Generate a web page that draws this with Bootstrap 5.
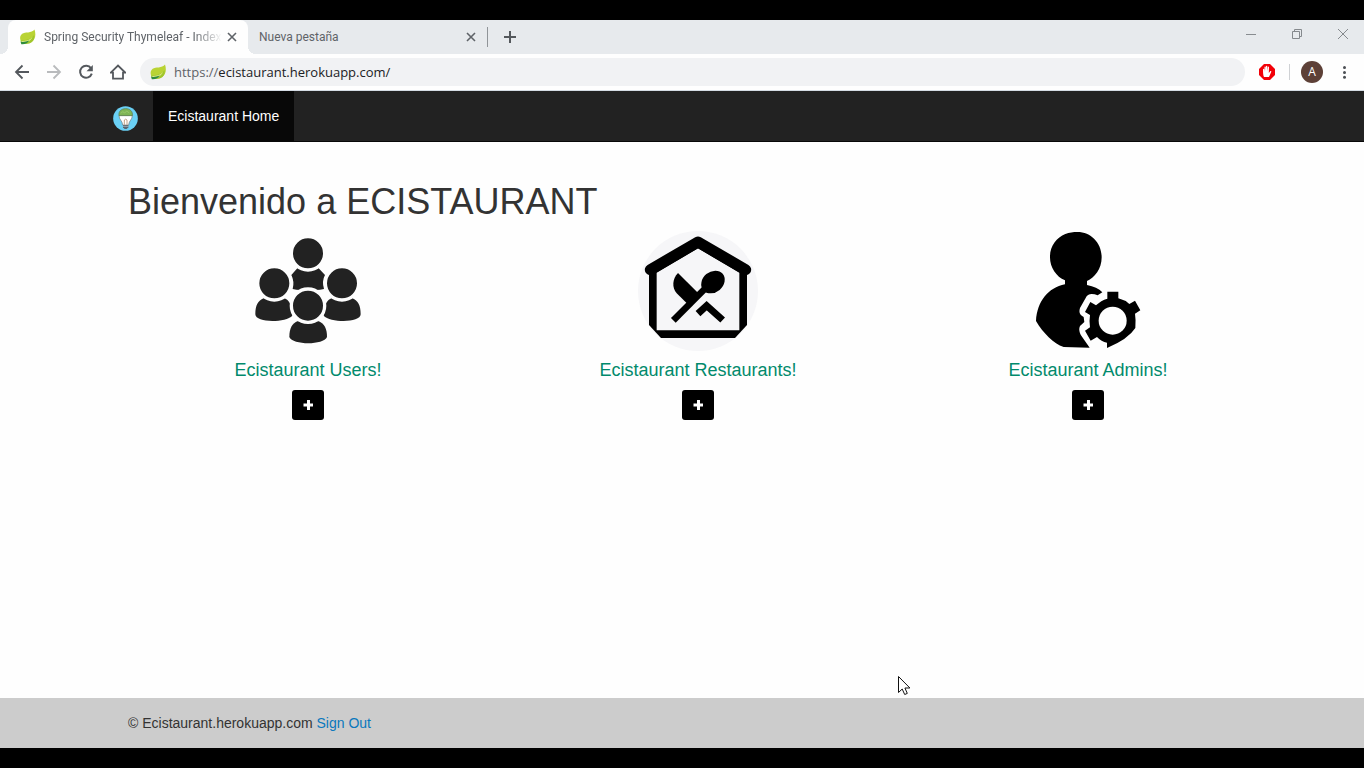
<!DOCTYPE html>
<html lang="es">
<head>
<meta charset="utf-8">
<meta name="viewport" content="width=device-width, initial-scale=1">
<title>Spring Security Thymeleaf - Index</title>
<link href="https://cdn.jsdelivr.net/npm/bootstrap@5.3.0/dist/css/bootstrap.min.css" rel="stylesheet">
<style>
  body { font-family: "Liberation Sans", Arial, sans-serif; font-size: 14px; line-height: 20px; color: #333; background: #000; }
  svg { display: block; flex: none; }
  button { font: inherit; }
  .plain-btn { border: 0; background: none; padding: 0; color: #5f6368; }
  .edge-bar { height: 20px; }
  .chrome-ui { font-family: "Open Sans", "Noto Sans", sans-serif; color: #5f6368; }
  .tab-strip { height: 34px; background: #e7eaed; font-family: Roboto, "Open Sans", sans-serif; font-size: 12px; padding: 0 16px 0 8px; }
  .tab-item { width: 239px; height: 34px; padding: 0 11px; }
  .tab-current { width: 240px; background: #fefefe; border-radius: 8px 8px 0 0; position: relative; }
  .tab-current::before, .tab-current::after { content: ""; position: absolute; bottom: 0; width: 8px; height: 8px; }
  .tab-current::before { left: -8px; background: radial-gradient(circle at 0 0, #e7eaed 8px, #fefefe 8px); }
  .tab-current::after { right: -8px; background: radial-gradient(circle at 100% 0, #e7eaed 8px, #fefefe 8px); }
  .tab-title { width: 180px; overflow: hidden; white-space: nowrap; }
  .tab-fade { -webkit-mask-image: linear-gradient(to right, #000 150px, transparent 178px); mask-image: linear-gradient(to right, #000 150px, transparent 178px); }
  .tab-rule { width: 1px; height: 20px; background: #909498; }
  .window-btns { gap: 36px; padding-bottom: 6px; }
  .tool-row { height: 37px; background: #fefefe; border-bottom: 1px solid #d5dce4; padding: 0 16px 0 14px; }
  .nav-btns { gap: 16px; margin-right: 14px; }
  .url-field { height: 28px; border-radius: 14px; background: #f1f2f4; padding: 0 10px; font-size: 13px; }
  .url-field input { border: 0; outline: 0; background: none; padding: 0; color: #202124; min-width: 0; }
  .tool-actions { margin-left: 14px; }
  .tool-rule { width: 1px; height: 16px; background: #cfd1d4; margin: 0 11px 0 14px; }
  .avatar-btn { width: 22px; height: 22px; margin-right: 17px; border-radius: 50%; background: #5d4037; color: #fff; font-size: 12px; line-height: 22px; }
  .site-nav { height: 51px; background: #222; border-bottom: 1px solid #080808; }
  .frame { max-width: 1170px; width: 100%; margin: 0 auto; padding: 0 16px; }
  .site-logo { padding-top: 15px; margin-right: 15px; }
  .site-nav .nav-link { height: 50px; padding: 15px; color: #fff; background: #080808; }
  .content-shift { padding-left: 32px; background: #fefefe; }
  .content-box { max-width: 1170px; margin: 0 auto; padding-top: 40px; }
  .content-box h1 { font-size: 36px; line-height: 40px; margin: 0 0 9px; padding: 0 15px; color: #333; }
  .role-title { font-size: 18px; line-height: 20px; margin: 9px 0 10px; font-weight: 400; color: #018a6c; }
  .add-btn { width: 32px; height: 30px; padding: 0; background: #000; border-radius: 3px; border: 0; }
  .site-footer { height: 50px; background: #ccc; }
  .site-footer .frame { padding-left: 31px; }
  .site-footer a { color: #0a78bd; text-decoration: none; }
  .pointer { position: fixed; left: 898px; top: 676px; }
</style>
</head>
<body class="d-flex flex-column min-vh-100">
<svg width="0" height="0" class="position-absolute" aria-hidden="true">
  <symbol id="leaf" viewBox="0 0 16 16">
    <path d="M15 .5c1.600 5 1.100 10-3 12.500C8.500 15 4.500 14 2 13 .3 10.500-.2 7 2.700 4.800 5.500 2.800 12 4.500 15 .5z" fill="#b9d334"/>
    <path d="M14.500 6C12 10.500 7 11 1.200 11.500l.8 2.500c4 1.600 8 1 10.500-1 2-1.700 2.500-4 2-7z" fill="#a0c62b"/>
    <path d="M1 12c4.500.2 9-.5 12-4-2 4-5 5.500-9 6z" fill="#e2ed8a"/>
    <path d="M1 12.600c2 .6 5.500.2 8.800-1-1.500 2.600-4.500 4.100-8 3.700z" fill="#2e8b3d"/>
  </symbol>
  <symbol id="cross" viewBox="0 0 10 10"><path d="M1 1l8 8M9 1L1 9" stroke="#5f6368" stroke-width="1.600"/></symbol>
  <symbol id="plus" viewBox="0 0 10 10"><path d="M4 0h3v3.500h3.500v3H7V10H4V6.500H.5v-3H4z" fill="#fff"/></symbol>
</svg>

<div class="edge-bar"></div>
<div class="chrome-ui">
  <div class="tab-strip d-flex align-items-center">
    <div class="tab-item tab-current d-flex align-items-center">
      <svg width="17" height="16" class="me-2"><use href="#leaf"/></svg>
      <div class="tab-title tab-fade">Spring Security Thymeleaf - Index</div>
      <button class="plain-btn ms-auto" aria-label="Cerrar"><svg width="10" height="10"><use href="#cross"/></svg></button>
    </div>
    <div class="tab-item d-flex align-items-center">
      <div class="tab-title">Nueva pestaña</div>
      <button class="plain-btn ms-auto" aria-label="Cerrar"><svg width="10" height="10"><use href="#cross"/></svg></button>
    </div>
    <div class="tab-rule"></div>
    <button class="plain-btn ms-3" aria-label="Nueva pestaña"><svg width="12" height="12"><path d="M6 0v12M0 6h12" stroke="#54585c" stroke-width="2"/></svg></button>
    <div class="window-btns d-flex ms-auto">
      <button class="plain-btn" aria-label="Minimizar"><svg width="10" height="10"><path d="M0 5.500h10" stroke="#888c90"/></svg></button>
      <button class="plain-btn" aria-label="Restaurar"><svg width="10" height="10"><path d="M.5 2.500h7v7h-7zM2.500 2V.5h7v7H8" fill="none" stroke="#85898d"/></svg></button>
      <button class="plain-btn" aria-label="Cerrar ventana"><svg width="10" height="10"><path d="M0 0l10 10M10 0L0 10" stroke="#85898d"/></svg></button>
    </div>
  </div>
  <div class="tool-row d-flex align-items-center">
    <div class="nav-btns d-flex">
      <button class="plain-btn" aria-label="Atrás"><svg width="16" height="16" fill="none" stroke="#54585d" stroke-width="1.800"><path d="M15 8H2M8.500 1.500L2 8l6.500 6.500"/></svg></button>
      <button class="plain-btn" aria-label="Adelante"><svg width="16" height="16" fill="none" stroke="#b9bbbd" stroke-width="1.800"><path d="M1 8h13M7.500 1.500L14 8l-6.500 6.500"/></svg></button>
      <button class="plain-btn" aria-label="Recargar"><svg width="16" height="16"><path d="M13 4.200A6 6 0 1 0 13.800 9.700" fill="none" stroke="#54585d" stroke-width="2"/><path d="M14.800 1v6.300H8.500z" fill="#54585d"/></svg></button>
      <button class="plain-btn" aria-label="Inicio"><svg width="16" height="16" fill="none" stroke="#54585d" stroke-width="1.800"><path d="M.8 8.600L8 1.500l7.200 7.100H13v6.100H3V8.600z"/></svg></button>
    </div>
    <div class="url-field d-flex align-items-center flex-grow-1">
      <svg width="16" height="16" class="me-2"><use href="#leaf"/></svg>
      <label for="address">https://</label><input id="address" class="flex-grow-1" type="text" value="ecistaurant.herokuapp.com/">
    </div>
    <div class="tool-actions d-flex align-items-center">
      <button class="plain-btn" aria-label="Bloqueador"><svg width="16" height="16"><path d="M5 0h6l5 5v6l-5 5H5l-5-5V5z" fill="#f20008"/><path d="M5 13c-.8-1.500-1-4-1-7.500 0-1 1.200-1 1.300 0l.2 2.500V3.300c0-1 1.200-1 1.300 0L7 7V2.500c0-1 1.300-1 1.300 0V7l.5-3.800c.1-1 1.300-.9 1.200.2L9.800 9l1.200-1.500c.7-.9 1.700-.3 1.200.6L10 13z" fill="#fff"/></svg></button>
      <div class="tool-rule"></div>
      <button class="plain-btn avatar-btn">A</button>
      <button class="plain-btn" aria-label="Menú"><svg width="8" height="14" fill="#4b4f54"><circle cx="4.500" cy="2.500" r="1.500"/><circle cx="4.500" cy="7.500" r="1.500"/><circle cx="4.500" cy="12.300" r="1.500"/></svg></button>
    </div>
  </div>
</div>

<nav class="site-nav">
  <div class="frame d-flex">
    <a href="#" class="site-logo d-block" aria-label="Ecistaurant"><svg width="25" height="25" viewBox="0 0 75 75">
      <circle cx="37.500" cy="37.500" r="37" fill="#6ad0f5"/>
      <path d="M18 28c0 14 10 15 11 29h18c1-14 11-15 11-29z" fill="#fff" stroke="#777" stroke-width="2"/>
      <path d="M18 29C16 15 26 8 38 8s22 7 20 21z" fill="#7fb555" stroke="#59744b" stroke-width="2"/>
      <path d="M24 22l5-5 6 4 6-6 8 6" stroke="#a7ce75" stroke-width="2" fill="none"/>
      <path d="M34 56V42q4-5 8 0v14" stroke="#a67449" stroke-width="2" fill="none"/>
      <path d="M30 57h16v7l-5 5h-6l-5-5z" fill="#5a6670"/><path d="M30 61h16" stroke="#b7cad4" stroke-width="2"/>
    </svg></a>
    <a href="#" class="nav-link">Ecistaurant Home</a>
  </div>
</nav>

<main class="content-shift flex-grow-1">
  <div class="content-box">
    <h1 class="fw-normal">Bienvenido a ECISTAURANT</h1>
    <div class="row g-0 text-center">
      <section class="col-4">
        <svg class="mx-auto" width="120" height="120" viewBox="84 18 360 360" fill="#222">
          <path d="M214 150l18-20h64l19 20q-10 18-3 42-24 6-48 0-24 6-46 0 6-22-4-42z"/>
          <circle cx="264" cy="85" r="50" stroke="#fefefe" stroke-width="10"/>
          <path d="M106 268c0-27 8-41 25-48h62c14 5 22 17 24 52-20 22-111 22-111-4zM422 268c0-27-8-41-25-48h-62c-14 5-22 17-24 52 20 22 111 22 111-4z"/>
          <g stroke="#fefefe" stroke-width="10">
            <circle cx="163" cy="175" r="50"/><circle cx="366" cy="175" r="50"/>
          </g>
          <path d="M208 336c0-25 8-40 24-47h64c17 7 25 22 25 47-10 25-103 25-113 0z"/>
          <circle cx="264" cy="242" r="50" stroke="#fefefe" stroke-width="10"/>
        </svg>
        <h4 class="role-title">Ecistaurant Users!</h4>
        <button class="btn add-btn" aria-label="Agregar usuario"><svg class="mx-auto" width="10" height="10"><use href="#plus"/></svg></button>
      </section>
      <section class="col-4">
        <svg class="mx-auto" width="120" height="120" viewBox="144 18 360 360">
          <circle cx="324" cy="198" r="180" fill="#f6f6f8"/>
          <path d="M177 135v165l36 39h222l36-39V135L324 50z"/>
          <path d="M200 143L324 70l124 73v173H200z" fill="#f6f6f8"/>
          <path d="M181 134L324 51l143 83" fill="none" stroke="#000" stroke-width="33" stroke-linecap="round" stroke-linejoin="round"/>
          <path d="M264 144l61 61-33 31-32-31c-15-18-13-43 4-61z"/>
          <path d="M250 286l94-94" stroke="#000" stroke-width="20"/>
          <ellipse cx="369" cy="171" rx="38" ry="31" transform="rotate(-40 369 171)"/>
          <path d="M324 266l26-24 48 43" fill="none" stroke="#000" stroke-width="21"/>
        </svg>
        <h4 class="role-title">Ecistaurant Restaurants!</h4>
        <button class="btn add-btn" aria-label="Agregar restaurante"><svg class="mx-auto" width="10" height="10"><use href="#plus"/></svg></button>
      </section>
      <section class="col-4">
        <svg class="mx-auto" width="120" height="120" viewBox="84 18 360 360">
          <path d="M232 21c42 0 73 34 73 76 0 35-21 61-44 71v12c20 4 36 11 46 22l-14 9c-17-7-31-5-36 8l-17 30c-4 13-1 21 11 27l2 15-13 12c-5 10-1 22 5 31l24 34-78-2c-30-10-62-42-83-78 4-60 36-99 87-110v-12c-27-12-46-40-45-72 0-32 20-56 46-67 12-4 24-6 36-6z"/>
          <path d="M322 200h33v20q20 5 33 17l17-10 16 29-16 10q3 18 1 43-21 33-85 60v-16q-17-3-30-17l-19 11-17-30 15-10q-3-18 0-37l-15-9 16-30 17 10q15-15 34-20z"/>
          <circle cx="338" cy="287" r="42" fill="#fefefe"/>
        </svg>
        <h4 class="role-title">Ecistaurant Admins!</h4>
        <button class="btn add-btn" aria-label="Agregar administrador"><svg class="mx-auto" width="10" height="10"><use href="#plus"/></svg></button>
      </section>
    </div>
  </div>
</main>

<footer class="site-footer d-flex align-items-center">
  <div class="frame">© Ecistaurant.herokuapp.com <a href="#">Sign Out</a></div>
</footer>
<div class="edge-bar"></div>

<svg class="pointer" width="13" height="20"><path d="M.5.500v16l3.700-3.500 2.500 5.500 2.600-1.100L6.900 12h5z" fill="#fff" stroke="#111"/></svg>
<script src="https://cdn.jsdelivr.net/npm/bootstrap@5.3.0/dist/js/bootstrap.bundle.min.js"></script>
</body>
</html>
